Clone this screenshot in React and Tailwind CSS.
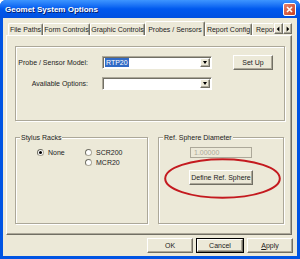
const raised =
  'border border-t-white border-l-white border-r-[#716f64] border-b-[#716f64] shadow-[inset_-1px_-1px_0_#aca899]';
const sunken =
  'border border-t-[#aca899] border-l-[#aca899] border-r-white border-b-white shadow-[inset_1px_1px_0_#716f64]';
const etched = 'border border-[#aca899] shadow-[1px_1px_0_white,inset_1px_1px_0_white]';

const tabs = [
  { label: 'File Paths', w: 'w-[35px]' },
  { label: 'Form Controls', w: 'w-[47px]' },
  { label: 'Graphic Controls', w: 'w-[55px]' },
  { label: 'Probes / Sensors', w: 'w-[60px]', active: true },
  { label: 'Report Config', w: 'w-[47px]' },
];

const Combo = ({ children }) => (
  <div className={`w-[110px] h-[13px] bg-white flex items-stretch ${sunken}`}>
    <div className="flex-1 flex items-center pl-[2px] overflow-hidden">{children}</div>
    <div className={`w-[10px] bg-[#ece9d8] flex items-center justify-center m-[1px] ${raised}`}>
      <div className="w-0 h-0 border-l-[2.5px] border-r-[2.5px] border-t-[3px] border-l-transparent border-r-transparent border-t-black" />
    </div>
  </div>
);

const Button = ({ children, w = 'w-[46px]', isDefault }) => (
  <div className={isDefault ? 'border border-black' : ''}>
    <div
      className={`${w} ${isDefault ? 'h-[13px]' : 'h-[15px]'} bg-[#ece9d8] flex items-center justify-center ${raised}`}
    >
      {children}
    </div>
  </div>
);

const Radio = ({ checked, label }) => (
  <div className="flex items-center gap-[4px] h-[10px]">
    <div className="w-[7px] h-[7px] rounded-full bg-white border border-[#aca899] border-t-[#716f64] border-l-[#716f64] flex items-center justify-center">
      {checked && <div className="w-[3px] h-[3px] rounded-full bg-black" />}
    </div>
    <span>{label}</span>
  </div>
);

const GroupBox = ({ title, className, children }) => (
  <div className={`relative ${etched} ${className}`}>
    <span className="absolute -top-[5px] left-[4px] px-[1px] bg-[#ece9d8] leading-[9px]">{title}</span>
    {children}
  </div>
);

export default function App() {
  return (
    <div
      className="w-[300px] h-[259px] flex flex-col bg-[#0054e3] rounded-t-[6px] overflow-hidden text-[#1c1c1c] text-[7px] leading-[9px]"
      style={{ fontFamily: '"Liberation Sans", Arial, sans-serif' }}
    >
      {/* title bar */}
      <div className="h-[18px] flex items-center justify-between pl-[5px] pr-[4px] bg-gradient-to-b from-[#3d95ff] via-[#0058ee] to-[#0050e0]">
        <span className="text-white font-bold text-[8px] [text-shadow:1px_1px_0_#0a1f6a]">Geomet System Options</span>
        <div className="w-[13px] h-[13px] rounded-[2px] border border-white bg-gradient-to-br from-[#e8806a] to-[#c8401e] flex items-center justify-center">
          <svg width="7" height="7" viewBox="0 0 7 7">
            <path d="M1 1 L6 6 M6 1 L1 6" stroke="white" strokeWidth="1.6" />
          </svg>
        </div>
      </div>

      {/* body */}
      <div className="flex-1 mx-[3px] mb-[3px] bg-[#ece9d8] flex flex-col">
        {/* tabs */}
        <div className="mt-[3px] ml-[5px] mr-[6px] h-[14px] flex items-end">
          {tabs.map((t) => (
            <div
              key={t.label}
              className={`${t.w} shrink-0 flex items-center justify-center whitespace-nowrap rounded-t-[2px] border-t border-l border-t-white border-l-white border-r border-r-[#716f64] shadow-[inset_-1px_0_0_#aca899] bg-[#ece9d8] ${
                t.active ? 'h-[15px] -mb-px relative z-10' : 'h-[12px]'
              }`}
            >
              {t.label}
            </div>
          ))}
          <div className="w-[21px] h-[12px] shrink-0 pl-[3px] whitespace-nowrap flex items-center border-t border-l border-t-white border-l-white">
            Repor
          </div>
          <div className="flex mb-[1px] ml-[1px]">
            {['M5 1 L2 4 L5 7 Z', 'M3 1 L6 4 L3 7 Z'].map((d) => (
              <div key={d} className={`w-[9px] h-[11px] bg-[#ece9d8] flex items-center justify-center ${raised}`}>
                <svg width="7" height="8" viewBox="0 0 8 8">
                  <path d={d} fill="black" />
                </svg>
              </div>
            ))}
          </div>
        </div>

        {/* tab panel */}
        <div className={`ml-[3px] w-[286px] h-[200px] bg-[#ece9d8] flex flex-col ${raised}`}>
          <div className={`ml-[8px] mt-[10px] w-[270px] h-[75px] pt-[7px] flex flex-col gap-[5px] ${etched}`}>
            <div className="flex items-center h-[16px]">
              <span className="w-[72px] text-right mr-[14px]">Probe / Sensor Model:</span>
              <Combo>
                <span className="bg-[#316ac5] text-white px-[1px]">RTP20</span>
              </Combo>
              <div className="ml-[21px]">
                <Button w="w-[40px]">Set Up</Button>
              </div>
            </div>
            <div className="flex items-center h-[16px]">
              <span className="w-[72px] text-right mr-[14px]">Available Options:</span>
              <Combo />
            </div>
          </div>

          <div className="ml-[8px] mt-[16px] flex gap-[10px]">
            <GroupBox title="Stylus Racks" className="w-[133px] h-[87px] pt-[9px] pl-[21px]">
              <div className="grid grid-cols-[48px_auto]">
                <Radio checked label="None" />
                <Radio label="SCR200" />
                <div />
                <Radio label="MCR20" />
              </div>
            </GroupBox>

            <GroupBox title="Ref. Sphere Diameter" className="w-[126px] h-[87px] pt-[9px] flex flex-col items-center">
              <div className="w-[62px] h-[11px] border border-[#aca899] bg-[#ece9d8] text-[#aca899] flex items-center pl-[3px]">
                1.00000
              </div>
              <div className="mt-[12px]">
                <Button w="w-[64px]">Define Ref. Sphere</Button>
              </div>
              <svg className="absolute left-[5px] top-[20px]" width="117" height="41" viewBox="0 0 117 41">
                <ellipse cx="58.5" cy="20.5" rx="57.3" ry="19.3" fill="none" stroke="#c41a1f" strokeWidth="2" />
              </svg>
            </GroupBox>
          </div>
        </div>

        {/* buttons */}
        <div className="mt-[3px] flex justify-end gap-[3px] pr-[4px]">
          <Button>OK</Button>
          <Button isDefault>Cancel</Button>
          <Button>
            <span>
              <span className="underline">A</span>pply
            </span>
          </Button>
        </div>
      </div>
    </div>
  );
}
